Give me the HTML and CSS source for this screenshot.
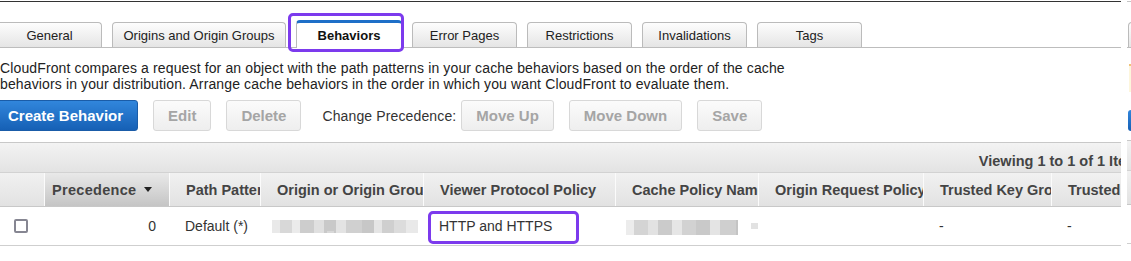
FILE: index.html
```html
<!DOCTYPE html>
<html lang="en">
<head>
    <meta charset="UTF-8">
    <meta name="viewport" content="width=device-width, initial-scale=1.0">
    <title>CloudFront Behaviors</title>
    <link rel="stylesheet" href="styles.css">
</head>
<body>
    <div class="page">
        <div class="main">
            <div class="tabs">
                <div class="tab tab-first">General</div>
                <div class="tab tab-wide">Origins and Origin Groups</div>
                <div class="tab tab-active">Behaviors<span class="mark mark-tab"></span></div>
                <div class="tab">Error Pages</div>
                <div class="tab">Restrictions</div>
                <div class="tab">Invalidations</div>
                <div class="tab">Tags</div>
            </div>

            <p class="intro">CloudFront compares a request for an object with the path patterns in your cache behaviors based on the order of the cache behaviors in your distribution. Arrange cache behaviors in the order in which you want CloudFront to evaluate them.</p>

            <div class="actions">
                <button class="btn btn-primary">Create Behavior</button>
                <button class="btn">Edit</button>
                <button class="btn">Delete</button>
                <span class="actions-label">Change Precedence:</span>
                <button class="btn">Move Up</button>
                <button class="btn">Move Down</button>
                <button class="btn">Save</button>
            </div>

            <div class="table">
                <div class="viewing">Viewing 1 to 1 of 1 Items</div>
                <div class="row row-head">
                    <div class="cell"></div>
                    <div class="cell cell-sorted">Precedence <span class="sort-arrow"></span></div>
                    <div class="cell">Path Pattern</div>
                    <div class="cell">Origin or Origin Group</div>
                    <div class="cell">Viewer Protocol Policy</div>
                    <div class="cell">Cache Policy Name</div>
                    <div class="cell">Origin Request Policy</div>
                    <div class="cell">Trusted Key Groups</div>
                    <div class="cell">Trusted Signers</div>
                </div>
                <div class="row row-body">
                    <div class="cell cell-check"><span class="checkbox"></span></div>
                    <div class="cell cell-num">0</div>
                    <div class="cell">Default (*)</div>
                    <div class="cell"><span class="blur blur-origin"></span></div>
                    <div class="cell cell-mark">HTTP and HTTPS<span class="mark mark-cell"></span></div>
                    <div class="cell"><span class="blur blur-cache"></span><span class="blur blur-dot"></span></div>
                    <div class="cell"></div>
                    <div class="cell">-</div>
                    <div class="cell">-</div>
                </div>
            </div>
        </div>

        <div class="side">
            <div class="side-tabs"><div class="side-tab"></div></div>
            <div class="side-note"></div>
            <div class="side-btn"></div>
            <div class="side-bar"></div>
            <div class="side-head"></div>
            <div class="side-row"></div>
        </div>
    </div>
</body>
</html>
```

FILE: styles.css
```css
body {
    margin: 0;
    background: #fff;
    color: #222;
    font-family: "Liberation Sans", Arial, sans-serif;
    overflow: hidden;
}

.page {
    display: flex;
    gap: 6px;
    width: 1131px;
    height: 261px;
    overflow: hidden;
}

.main {
    flex: 0 0 1121px;
    margin-top: 1px;
    border-top: 1px solid #333;
    overflow: hidden;
}

/* tabs */

.tabs {
    display: flex;
    align-items: flex-end;
    gap: 10px;
    height: 25px;
    padding-top: 20px;
    margin-left: -3px;
    border-bottom: 1px solid #bdbdbd;
}

.tab {
    box-sizing: border-box;
    flex: 0 0 105px;
    height: 25px;
    display: flex;
    align-items: center;
    justify-content: center;
    border: 1px solid #bbb;
    border-bottom: none;
    border-radius: 4px 4px 0 0;
    background: linear-gradient(#fdfdfd, #e5e5e5);
    font-size: 13px;
    color: #222;
}

.tab-wide {
    flex-basis: 174px;
}

.tab-active {
    position: relative;
    flex-basis: 106px;
    height: 28px;
    margin-bottom: -1px;
    border-top: 3px solid #1e6fc8;
    background: #fff;
    font-weight: bold;
    color: #111;
}

.mark {
    position: absolute;
    border: 3px solid #7c3aed;
    border-radius: 5px;
}

.mark-tab {
    left: -9px;
    right: -3px;
    top: -10px;
    bottom: -4px;
}

/* intro + actions */

.intro {
    width: 810px;
    margin: 12px 0 0;
    font-size: 14px;
    line-height: 16px;
    letter-spacing: 0.13px;
    color: #222;
}

.actions {
    display: flex;
    align-items: center;
    gap: 15px;
    margin-top: 8px;
}

.btn {
    box-sizing: border-box;
    height: 31px;
    padding: 0 14px;
    border: 1px solid #d8d8d8;
    border-radius: 3px;
    background: linear-gradient(#fbfbfb, #eeeeee);
    font-family: "Liberation Sans", Arial, sans-serif;
    font-size: 15px;
    font-weight: bold;
    color: #a5a5a5;
}

.btn-primary {
    margin-left: -7px;
    border-color: #1a5ca8;
    background: linear-gradient(#3186dc, #1660b5);
    color: #fff;
}

.actions-label {
    margin: 0 -10px 0 6px;
    font-size: 14px;
    letter-spacing: 0.13px;
    color: #333;
}

/* table */

.table {
    width: 1152px;
    margin-top: 11px;
    border-top: 1px solid #c8c8c8;
}

.viewing {
    height: 19px;
    padding: 10px 5px 0 0;
    border-bottom: 1px solid #d2d2d2;
    background: linear-gradient(#f3f3f3, #e3e3e3);
    text-align: right;
    font-size: 14.5px;
    line-height: 16px;
    font-weight: bold;
    color: #444;
}

.row {
    display: grid;
    grid-template-columns: 44px 125px 91px 163px 192px 143px 165px 128px 101px;
}

.cell {
    display: flex;
    align-items: center;
    padding-left: 16px;
    white-space: nowrap;
    overflow: hidden;
}

.row-head {
    height: 33px;
    border-bottom: 1px solid #c8c8c8;
    background: linear-gradient(#f1f1f1, #e2e2e2);
    font-size: 14.5px;
    font-weight: bold;
    color: #444;
}

.row-head .cell {
    border-left: 1px solid #fbfbfb;
}

.row-head .cell:first-child {
    border-left: none;
}

.row-head .cell-sorted {
    padding-left: 7px;
    letter-spacing: 0.3px;
    background: linear-gradient(#e9e9e9, #c5c5c5);
}

.sort-arrow {
    margin-left: 8px;
    border-left: 4px solid transparent;
    border-right: 4px solid transparent;
    border-top: 5px solid #222;
}

.row-body {
    height: 38px;
    border-bottom: 1px solid #cfcfcf;
    font-size: 14px;
    color: #333;
}

.cell-check {
    padding-left: 14px;
}

.checkbox {
    box-sizing: border-box;
    width: 14px;
    height: 14px;
    border: 2px solid #868692;
    border-radius: 2px;
}

.cell-num {
    justify-content: flex-end;
    padding: 0 13px 0 0;
}

.cell-mark {
    position: relative;
    overflow: visible;
}

.mark-cell {
    left: 5px;
    top: 4px;
    width: 145px;
    height: 27px;
}

.blur {
    display: block;
    filter: blur(0.7px);
}

.blur-origin {
    width: 146px;
    height: 13px;
    margin: 1px 0 0 -4px;
    background:
        linear-gradient(90deg, transparent 0 55px, #d8d8d8 55px 62px, transparent 62px) 0 11px / 100% 2px no-repeat,
        linear-gradient(90deg, #e9e9e9 0 8px, #d8d8d8 8px 20px, #ebebeb 20px 28px, #cdcdcd 28px 42px, #e0e0e0 42px 52px,
            #c9c9c9 52px 64px, #e3e3e3 64px 74px, #d0d0d0 74px 90px, #c7c7c7 90px 102px, #e5e5e5 102px 110px,
            #cfcfcf 110px 122px, #dcdcdc 122px 134px, #e9e9e9 134px 146px);
}

.blur-cache {
    width: 134px;
    height: 15px;
    margin: 2px 0 0 -5px;
    background: linear-gradient(90deg, #ececec 0 8px, #d4d4d4 8px 22px, #e2e2e2 22px 32px, #cbcbcb 32px 46px,
        #e6e6e6 46px 56px, #d2d2d2 56px 70px, #c9c9c9 70px 84px, #e4e4e4 84px 94px, #cfcfcf 94px 110px,
        #c4c4c4 110px 122px, #e2e2e2 122px 134px);
}

.blur-dot {
    width: 9px;
    height: 6px;
    margin-left: 13px;
    background: #e2e2e2;
}

/* clipped neighbour panel on the right */

.side {
    flex: 0 0 200px;
    margin-top: 1px;
    border-top: 1px solid #c4c4c4;
}

.side-tabs {
    height: 25px;
    padding-top: 20px;
    border-bottom: 1px solid #bdbdbd;
}

.side-tab {
    width: 105px;
    height: 24px;
    margin-left: 1px;
    border: 1px solid #bbb;
    border-bottom: none;
    border-radius: 4px 4px 0 0;
    background: linear-gradient(#fdfdfd, #e5e5e5);
}

.side-note {
    height: 26px;
    margin: 16px 0 0 2px;
    border-top: 2px solid #f1c27a;
    background: #fdf6dc;
}

.side-btn {
    height: 21px;
    margin: 18px 0 0 1px;
    border-radius: 3px 0 0 3px;
    background: linear-gradient(#3186dc, #1660b5);
}

.side-bar {
    height: 29px;
    margin-top: 9px;
    border-top: 1px solid #c8c8c8;
    background: linear-gradient(#f3f3f3, #e3e3e3);
}

.side-head {
    height: 33px;
    border-top: 1px solid #d2d2d2;
    border-bottom: 1px solid #c8c8c8;
    background: linear-gradient(#f1f1f1, #e2e2e2);
}

.side-row {
    height: 38px;
    border-bottom: 1px solid #cfcfcf;
}
```
